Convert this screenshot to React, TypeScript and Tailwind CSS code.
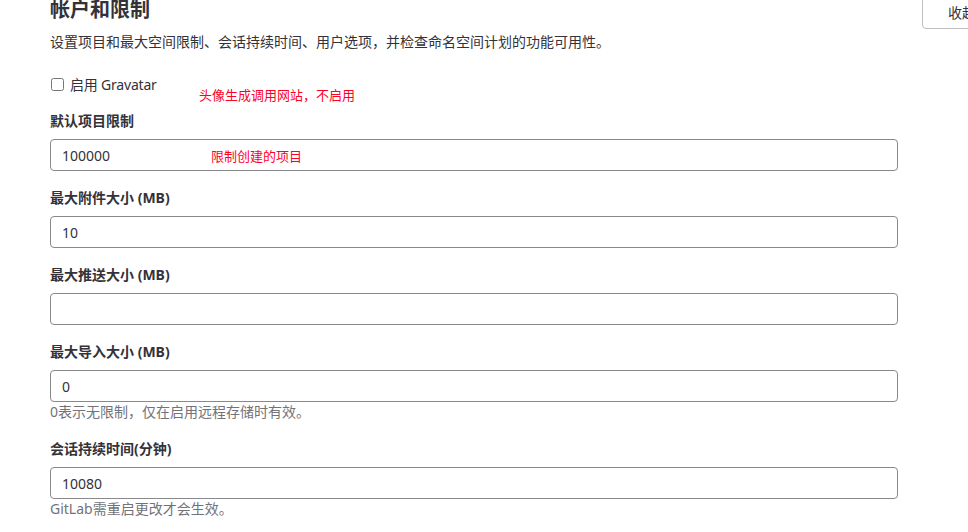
const font = '[font-family:"Noto_Sans","Noto_Sans_CJK_SC",sans-serif]'

interface FieldProps {
  label: string
  value: string
  help?: string
  note?: string
}

function Field({ label, value, help, note }: FieldProps) {
  return (
    <div className="mb-[17px]">
      <label className="block text-[14px] leading-[20px] font-bold text-[#333238] mb-[8px]">{label}</label>
      <div className="relative">
        <input
          readOnly
          value={value}
          className="block w-full h-[32px] px-[11px] text-[14px] text-[#333238] bg-white border border-[#89888d] rounded-[4px] outline-none"
        />
        {/* 截图上的红色批注 */}
        {note && (
          <span className="absolute left-[161px] top-[8px] text-[13px] leading-[18px] text-[#ff0026] pointer-events-none">
            {note}
          </span>
        )}
      </div>
      {help && <p className="text-[14px] leading-[20px] text-[#737278] mb-[1px]">{help}</p>}
    </div>
  )
}

export default function App() {
  return (
    <div className={`${font} w-[968px] h-[532px] overflow-hidden bg-white flex`}>
      {/* 左侧表单 */}
      <section className="w-[898px] pl-[50px] shrink-0">
        <h4 className="text-[20px] leading-[28px] font-bold text-[#333238] -mt-[4px]">帐户和限制</h4>
        <p className="mt-2 text-[14px] leading-[20px] text-[#333238]">
          设置项目和最大空间限制、会话持续时间、用户选项，并检查命名空间计划的功能可用性。
        </p>

        <div className="relative mt-[22px] flex items-center gap-[6px] h-[20px] pl-[1px]">
          <input type="checkbox" className="w-[13px] h-[13px] m-0" />
          <span className="text-[14px] text-[#333238] tracking-[-0.2px]">启用 Gravatar</span>
          <span className="absolute left-[149px] top-[12px] text-[13px] leading-[18px] text-[#ff0026]">
            头像生成调用网站，不启用
          </span>
        </div>

        <div className="mt-[17px]">
          <Field label="默认项目限制" value="100000" note="限制创建的项目" />
          <Field label="最大附件大小 (MB)" value="10" />
          <Field label="最大推送大小 (MB)" value="" />
          <Field label="最大导入大小 (MB)" value="0" help="0表示无限制，仅在启用远程存储时有效。" />
          <Field label="会话持续时间(分钟)" value="10080" help="GitLab需重启更改才会生效。" />
        </div>
      </section>

      {/* 右上角按钮 */}
      <div className="pl-[24px]">
        <button className="-mt-[9px] h-[32px] pl-[25px] pr-[16px] whitespace-nowrap text-[14px] text-[#333238] bg-white border border-[#bfbfc3] rounded-[4px]">
          收起
        </button>
      </div>
    </div>
  )
}
